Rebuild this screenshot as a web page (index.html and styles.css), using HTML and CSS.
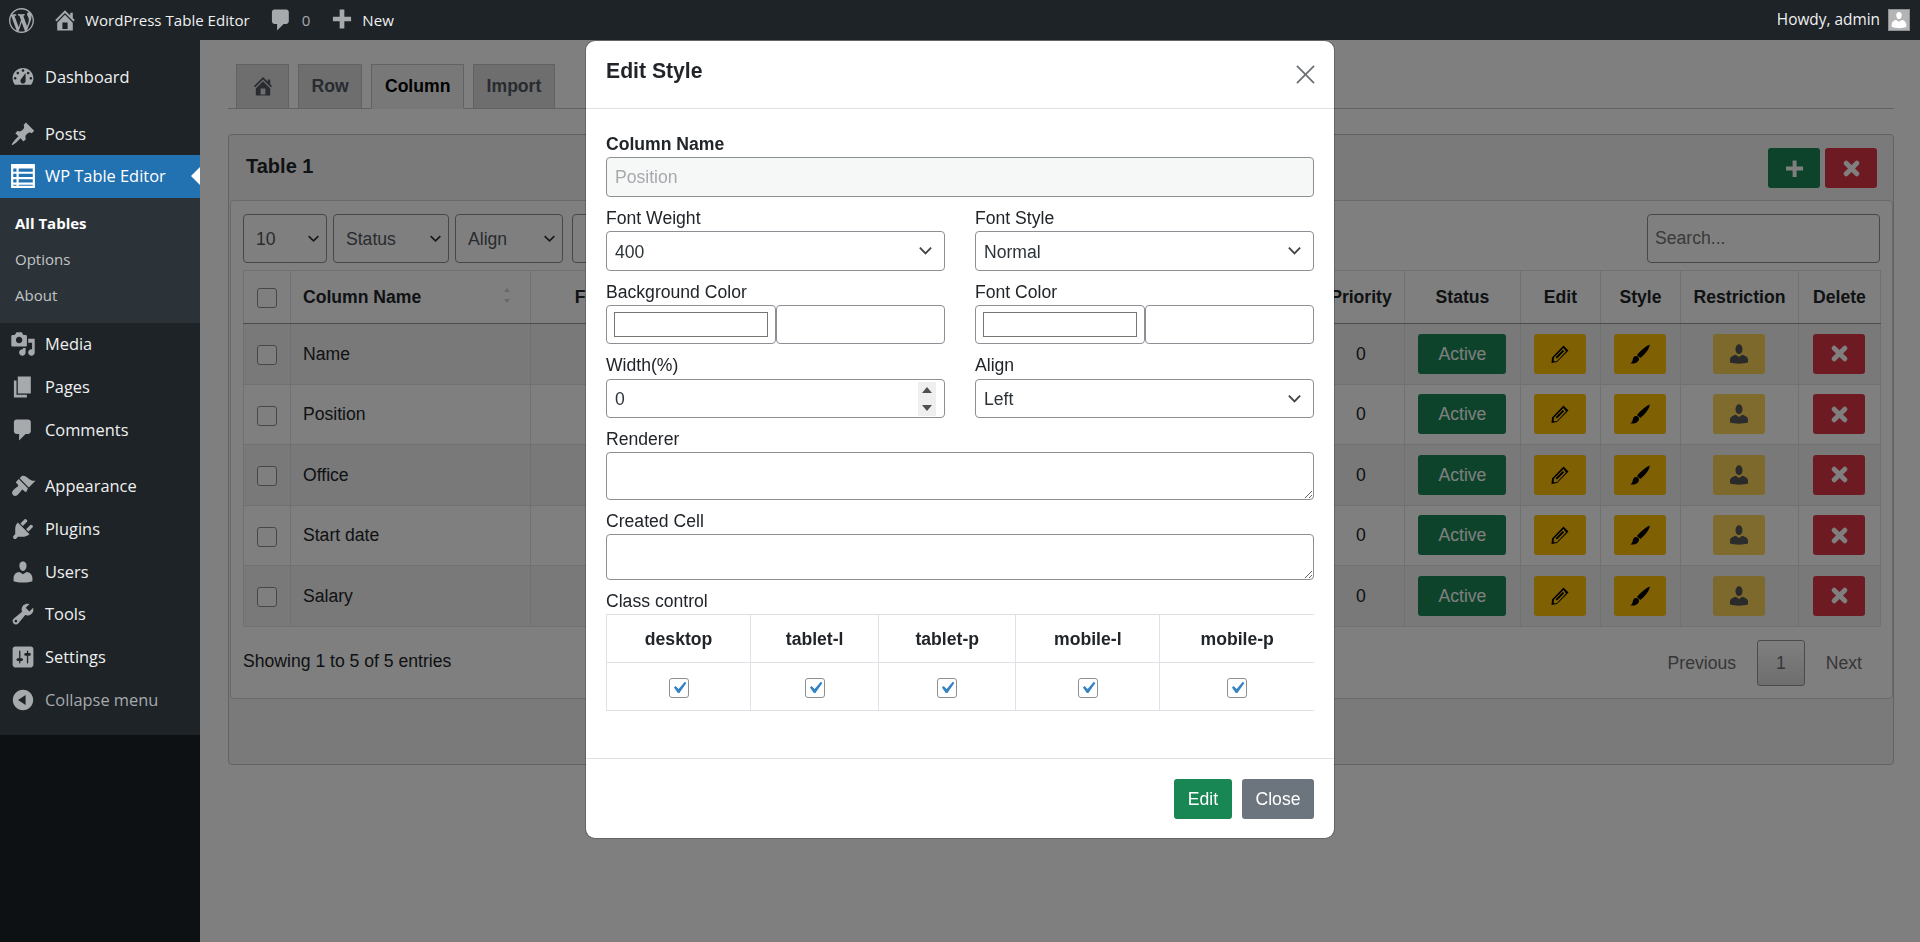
FILE: index.html
```html
<!DOCTYPE html>
<html lang="en">
<head>
    <meta charset="UTF-8">
    <title>WP Table Editor</title>
    <link rel="stylesheet" href="styles.css">
</head>
<body>
    <svg class="sprites" xmlns="http://www.w3.org/2000/svg">
        <symbol id="i-wp" viewBox="0 0 20 20"><path fill-rule="evenodd" d="M20 10c0-5.51-4.49-10-10-10C4.48 0 0 4.49 0 10c0 5.52 4.48 10 10 10 5.51 0 10-4.48 10-10zM7.78 15.37L4.37 6.22c.55-.02 1.17-.08 1.17-.08.5-.06.44-1.13-.06-1.11 0 0-1.45.11-2.37.11-.18 0-.37 0-.58-.01C4.12 2.69 6.87 1.11 10 1.11c2.33 0 4.45.87 6.05 2.34-.68-.11-1.65.39-1.65 1.58 0 .74.45 1.36.9 2.1.35.61.55 1.36.55 2.46 0 1.49-1.4 5-1.4 5l-3.03-8.37c.54-.02.82-.17.82-.17.5-.05.44-1.25-.06-1.22 0 0-1.44.12-2.38.12-.87 0-2.33-.12-2.33-.12-.5-.03-.56 1.2-.06 1.22l.92.08 1.26 3.41zM17.41 10c.24-.64.74-1.87.43-4.25.7 1.29 1.05 2.71 1.05 4.25 0 3.29-1.73 6.24-4.4 7.78.97-2.59 1.94-5.2 2.92-7.78zM6.1 18.09C3.12 16.65 1.11 13.53 1.11 10c0-1.3.23-2.48.72-3.59C3.25 10.3 4.67 14.2 6.1 18.09zm4.03-6.63l2.58 6.98c-.86.29-1.76.45-2.71.45-.79 0-1.57-.11-2.29-.33.81-2.38 1.62-4.74 2.42-7.1z"/></symbol>
        <symbol id="i-home" viewBox="0 0 20 20"><path fill-rule="evenodd" d="M16 8.5l1.53 1.53-1.06 1.06L10 4.62l-6.47 6.47-1.06-1.06L10 2.5l4 4v-2h2v4zm-6-2.46l6 5.99V18H4v-5.97zM12 17v-5H8v5h4z"/></symbol>
        <symbol id="i-comment" viewBox="0 0 20 20"><path d="M5 2h9c1.1 0 2 .9 2 2v7c0 1.1-.9 2-2 2h-2l-5 5v-5H5c-1.1 0-2-.9-2-2V4c0-1.1.9-2 2-2z"/></symbol>
        <symbol id="i-new" viewBox="0 0 20 20"><path d="M17 7.5v3.5h-5.2v5.5H8.2V11H3V7.5h5.2V2h3.6v5.5z"/></symbol>
        <symbol id="i-dashboard" viewBox="0 0 20 20"><path fill-rule="evenodd" d="M3.76 16h12.48c1.1-1.37 1.76-3.11 1.76-5 0-4.42-3.58-8-8-8s-8 3.58-8 8c0 1.89.66 3.63 1.76 5zM10 4c.55 0 1 .45 1 1s-.45 1-1 1-1-.45-1-1 .45-1 1-1zM6 6c.55 0 1 .45 1 1s-.45 1-1 1-1-.45-1-1 .45-1 1-1zm8 0c.55 0 1 .45 1 1s-.45 1-1 1-1-.45-1-1 .45-1 1-1zm-5.37 5.55L12 7v6c0 1.1-.9 2-2 2s-2-.9-2-2c0-.57.24-1.08.63-1.45zM4 10c.55 0 1 .45 1 1s-.45 1-1 1-1-.45-1-1 .45-1 1-1zm12 0c.55 0 1 .45 1 1s-.45 1-1 1-1-.45-1-1 .45-1 1-1z"/></symbol>
        <symbol id="i-post" viewBox="0 0 20 20"><path d="M10.44 3.02l1.82-1.82 6.36 6.35-1.83 1.82c-1.05-.68-2.48-.57-3.41.36l-.75.75c-.92.93-1.04 2.35-.35 3.41l-1.83 1.82-2.41-2.41-2.8 2.79c-.42.42-3.38 2.71-3.8 2.29s1.86-3.39 2.28-3.81l2.79-2.79L4.1 9.36l1.83-1.82c1.05.69 2.48.57 3.4-.36l.75-.75c.93-.92 1.05-2.35.36-3.41z"/></symbol>
        <symbol id="i-media" viewBox="0 0 20 20"><path fill-rule="evenodd" d="M13 11V4c0-.55-.45-1-1-1h-1.67L9 1H5L3.67 3H2c-.55 0-1 .45-1 1v7c0 .55.45 1 1 1h10c.55 0 1-.45 1-1zM7 4.5c1.38 0 2.5 1.12 2.5 2.5S8.38 9.5 7 9.5 4.5 8.38 4.5 7 5.62 4.5 7 4.5zM14 6h5v10.5c0 1.38-1.12 2.5-2.5 2.5S14 17.88 14 16.5s1.12-2.5 2.5-2.5c.17 0 .34.02.5.05V9h-3V6zm-4 8.05V13h2v3.5c0 1.38-1.12 2.5-2.5 2.5S7 17.88 7 16.5 8.12 14 9.5 14c.17 0 .34.02.5.05z"/></symbol>
        <symbol id="i-page" viewBox="0 0 20 20"><path d="M6 15V2h10v13H6zm-1 1h8v2H3V5h2v11z"/></symbol>
        <symbol id="i-appearance" viewBox="0 0 20 20"><path d="M14.48 11.06L7.41 3.99l1.5-1.5c.5-.56 2.3-.47 3.51.32 1.21.8 1.43 1.28 2.91 2.1 1.18.64 2.45 1.26 4.45.85zm-.71.71L6.7 4.7 4.93 6.47c-.39.39-.39 1.02 0 1.41l1.06 1.06c.39.39.39 1.03 0 1.42-.6.6-6.39 3.82-3.67 6.54 2.73 2.72 5.94-3.07 6.54-3.67.39-.39 1.03-.39 1.42 0l1.06 1.06c.39.39 1.02.39 1.41 0z"/></symbol>
        <symbol id="i-plugin" viewBox="0 0 20 20"><path d="M13.11 4.36L9.87 7.6 8 5.73l3.24-3.24c.35-.34 1.05-.2 1.56.32.52.51.66 1.21.31 1.55zm-8 1.77l.91-1.12 9.01 9.01-1.19.84c-.71.71-2.63 1.16-3.82 1.16H6.14L4.9 17.26c-.59.59-1.54.59-2.12 0-.59-.58-.59-1.53 0-2.12l1.24-1.24v-3.88c0-1.13.4-3.19 1.09-3.89zm7.26 3.97l3.24-3.24c.34-.35 1.04-.21 1.55.31.52.51.66 1.21.31 1.55l-3.24 3.25z"/></symbol>
        <symbol id="i-users" viewBox="0 0 20 20"><path d="M10 9.25c-2.27 0-2.73-3.44-2.73-3.44C7 4.02 7.82 2 9.97 2c2.16 0 2.98 2.02 2.71 3.81 0 0-.41 3.44-2.68 3.44zm0 2.57L12.72 10c2.39 0 4.52 2.33 4.52 4.53v2.49s-3.65 1.13-7.24 1.13c-3.65 0-7.24-1.13-7.24-1.13v-2.49c0-2.25 1.94-4.48 4.47-4.48z"/></symbol>
        <symbol id="i-tools" viewBox="0 0 20 20"><path fill-rule="evenodd" d="M16.68 9.77c-1.34 1.34-3.3 1.67-4.95.99l-5.41 6.52c-.99.99-2.59.99-3.58 0s-.99-2.59 0-3.57l6.52-5.42c-.68-1.65-.35-3.61.99-4.95 1.28-1.28 3.12-1.62 4.72-1.06l-2.89 2.89 2.82 2.82 2.86-2.87c.53 1.58.18 3.39-1.08 4.65zM3.81 16.21c.4.39 1.04.39 1.43 0 .4-.4.4-1.04 0-1.43-.39-.4-1.03-.4-1.43 0-.39.39-.39 1.03 0 1.43z"/></symbol>
        <symbol id="i-settings" viewBox="0 0 20 20"><path fill-rule="evenodd" d="M18 16V4c0-1.1-.9-2-2-2H4c-1.1 0-2 .9-2 2v12c0 1.1.9 2 2 2h12c1.1 0 2-.9 2-2zM8 11h1c.55 0 1 .45 1 1s-.45 1-1 1H8v1.5c0 .28-.22.5-.5.5s-.5-.22-.5-.5V13H6c-.55 0-1-.45-1-1s.45-1 1-1h1V5.5c0-.28.22-.5.5-.5s.5.22.5.5V11zm5-2h-1c-.55 0-1-.45-1-1s.45-1 1-1h1V5.5c0-.28.22-.5.5-.5s.5.22.5.5V7h1c.55 0 1 .45 1 1s-.45 1-1 1h-1v5.5c0 .28-.22.5-.5.5s-.5-.22-.5-.5V9z"/></symbol>
        <symbol id="i-collapse" viewBox="0 0 20 20"><path fill-rule="evenodd" d="M10 2.16c4.33 0 7.84 3.51 7.84 7.84s-3.51 7.84-7.84 7.84S2.16 14.33 2.16 10 5.71 2.16 10 2.16zm2 11.72V6.12L6.18 9.97z"/></symbol>
        <symbol id="i-list" viewBox="0 0 24 24"><path fill-rule="evenodd" d="M1 1h22v22H1zM3 5v3h3V5zm5 0v3h13V5zM3 10v3h3v-3zm5 0v3h13v-3zM3 15v3h3v-3zm5 0v3h13v-3zM3 20v1h3v-1zm5 0v1h13v-1z"/></symbol>
        <symbol id="i-plus" viewBox="0 0 18 18"><path d="M7 .5h4.2V7H18v4.2h-6.8V18H7v-6.8H0V7h7z"/></symbol>
        <symbol id="i-remove" viewBox="0 0 16 16"><path fill="none" stroke="currentColor" stroke-width="4.6" stroke-linecap="round" d="M3 3l10 10M13 3L3 13"/></symbol>
        <symbol id="i-pencil" viewBox="0 0 18 18"><path fill-rule="evenodd" d="M12.5.5l5 5L6 17l-5.5 1L1 12.500zM12.500 3L3 12.500l-.4 2.900 1 1L6 16l9-9.500zM11.800 5l1.400 1.300L6 13.500l-1.400-1.300z"/></symbol>
        <symbol id="i-brush" viewBox="0 0 20 20"><path d="M19.600.4c.6 3.600-4.400 9.800-9.200 13.700L6.900 10.900C11 6.200 16.200 1.700 19.600.4zM5.700 12.100c2.300-.2 3.900 1.700 3.100 3.800-1 2.900-5.400 4.300-8.500 3.500 2-.9 2.200-2.500 2.600-4.300.3-1.600 1.300-2.800 2.800-3z"/></symbol>
        <symbol id="i-user" viewBox="0 0 20 20"><ellipse cx="10" cy="5.200" rx="3.500" ry="4.900"/><path d="M1 18.500v-3c0-2.600 3.100-3.900 5.700-4.700L10 13l3.300-2.200c2.600.8 5.700 2.100 5.700 4.700v3c-5.300 1.500-12.700 1.500-18 0z"/></symbol>
    </svg>

    <header class="adminbar">
        <svg class="bar-logo"><use href="#i-wp"/></svg>
        <svg class="bar-icon bar-home"><use href="#i-home"/></svg>
        <span class="bar-text">WordPress Table Editor</span>
        <svg class="bar-icon bar-comment"><use href="#i-comment"/></svg>
        <span class="bar-count">0</span>
        <svg class="bar-icon bar-new"><use href="#i-new"/></svg>
        <span class="bar-text">New</span>
        <span class="bar-howdy">Howdy, admin</span>
        <span class="avatar"><svg><use href="#i-users"/></svg></span>
    </header>

    <div class="wrap">
        <aside class="sidebar">
            <nav class="menu">
                <a class="menu-item"><svg><use href="#i-dashboard"/></svg>Dashboard</a>
                <div class="menu-sep"></div>
                <a class="menu-item"><svg><use href="#i-post"/></svg>Posts</a>
                <a class="menu-item active"><svg><use href="#i-list"/></svg>WP Table Editor</a>
                <div class="submenu">
                    <a class="current">All Tables</a>
                    <a>Options</a>
                    <a>About</a>
                </div>
                <a class="menu-item"><svg><use href="#i-media"/></svg>Media</a>
                <a class="menu-item"><svg><use href="#i-page"/></svg>Pages</a>
                <a class="menu-item"><svg><use href="#i-comment"/></svg>Comments</a>
                <div class="menu-sep"></div>
                <a class="menu-item"><svg><use href="#i-appearance"/></svg>Appearance</a>
                <a class="menu-item"><svg><use href="#i-plugin"/></svg>Plugins</a>
                <a class="menu-item"><svg><use href="#i-users"/></svg>Users</a>
                <a class="menu-item"><svg><use href="#i-tools"/></svg>Tools</a>
                <a class="menu-item"><svg><use href="#i-settings"/></svg>Settings</a>
                <a class="menu-item collapse"><svg><use href="#i-collapse"/></svg>Collapse menu</a>
            </nav>
        </aside>

        <main class="content">
            <div class="tabs">
                <a class="tab tab-home"><svg><use href="#i-home"/></svg></a>
                <a class="tab">Row</a>
                <a class="tab tab-active">Column</a>
                <a class="tab">Import</a>
            </div>

            <section class="card">
                <div class="card-head">
                    <h2>Table 1</h2>
                    <div class="head-buttons">
                        <button class="btn btn-green btn-icon"><svg class="ico-plus"><use href="#i-plus"/></svg></button>
                        <button class="btn btn-red btn-icon"><svg class="ico-remove"><use href="#i-remove"/></svg></button>
                    </div>
                </div>
                <div class="card-inner">
                    <div class="toolbar">
                        <select class="tool-select len"><option>10</option></select>
                        <select class="tool-select status"><option>Status</option></select>
                        <select class="tool-select align"><option>Align</option></select>
                        <select class="tool-select extra"></select>
                        <input class="search" type="text" placeholder="Search...">
                    </div>

                    <table class="grid">
                        <colgroup>
                            <col class="c-check"><col class="c-name"><col class="c-weight"><col class="c-hidden"><col class="c-hidden"><col class="c-hidden"><col class="c-hidden"><col class="c-hidden">
                            <col class="c-priority"><col class="c-status"><col class="c-edit"><col class="c-style"><col class="c-restrict"><col class="c-delete">
                        </colgroup>
                        <thead>
                            <tr>
                                <th><input class="check" type="checkbox"></th>
                                <th class="sortable">Column Name</th>
                                <th>Font Weight</th>
                                <th></th><th></th><th></th><th></th><th></th>
                                <th>Priority</th>
                                <th>Status</th>
                                <th>Edit</th>
                                <th>Style</th>
                                <th>Restriction</th>
                                <th>Delete</th>
                            </tr>
                        </thead>
                        <tbody>
                            <tr>
                                <td><input class="check" type="checkbox"></td>
                                <td class="name">Name</td>
                                <td></td><td></td><td></td><td></td><td></td><td></td>
                                <td>0</td>
                                <td><button class="btn btn-green btn-active">Active</button></td>
                                <td><button class="btn btn-yellow btn-icon"><svg class="ico-pencil"><use href="#i-pencil"/></svg></button></td>
                                <td><button class="btn btn-yellow btn-icon"><svg class="ico-brush"><use href="#i-brush"/></svg></button></td>
                                <td><button class="btn btn-yellow btn-icon btn-off"><svg class="ico-user"><use href="#i-user"/></svg></button></td>
                                <td><button class="btn btn-red btn-icon"><svg class="ico-remove"><use href="#i-remove"/></svg></button></td>
                            </tr>
                            <tr>
                                <td><input class="check" type="checkbox"></td>
                                <td class="name">Position</td>
                                <td></td><td></td><td></td><td></td><td></td><td></td>
                                <td>0</td>
                                <td><button class="btn btn-green btn-active">Active</button></td>
                                <td><button class="btn btn-yellow btn-icon"><svg class="ico-pencil"><use href="#i-pencil"/></svg></button></td>
                                <td><button class="btn btn-yellow btn-icon"><svg class="ico-brush"><use href="#i-brush"/></svg></button></td>
                                <td><button class="btn btn-yellow btn-icon btn-off"><svg class="ico-user"><use href="#i-user"/></svg></button></td>
                                <td><button class="btn btn-red btn-icon"><svg class="ico-remove"><use href="#i-remove"/></svg></button></td>
                            </tr>
                            <tr>
                                <td><input class="check" type="checkbox"></td>
                                <td class="name">Office</td>
                                <td></td><td></td><td></td><td></td><td></td><td></td>
                                <td>0</td>
                                <td><button class="btn btn-green btn-active">Active</button></td>
                                <td><button class="btn btn-yellow btn-icon"><svg class="ico-pencil"><use href="#i-pencil"/></svg></button></td>
                                <td><button class="btn btn-yellow btn-icon"><svg class="ico-brush"><use href="#i-brush"/></svg></button></td>
                                <td><button class="btn btn-yellow btn-icon btn-off"><svg class="ico-user"><use href="#i-user"/></svg></button></td>
                                <td><button class="btn btn-red btn-icon"><svg class="ico-remove"><use href="#i-remove"/></svg></button></td>
                            </tr>
                            <tr>
                                <td><input class="check" type="checkbox"></td>
                                <td class="name">Start date</td>
                                <td></td><td></td><td></td><td></td><td></td><td></td>
                                <td>0</td>
                                <td><button class="btn btn-green btn-active">Active</button></td>
                                <td><button class="btn btn-yellow btn-icon"><svg class="ico-pencil"><use href="#i-pencil"/></svg></button></td>
                                <td><button class="btn btn-yellow btn-icon"><svg class="ico-brush"><use href="#i-brush"/></svg></button></td>
                                <td><button class="btn btn-yellow btn-icon btn-off"><svg class="ico-user"><use href="#i-user"/></svg></button></td>
                                <td><button class="btn btn-red btn-icon"><svg class="ico-remove"><use href="#i-remove"/></svg></button></td>
                            </tr>
                            <tr>
                                <td><input class="check" type="checkbox"></td>
                                <td class="name">Salary</td>
                                <td></td><td></td><td></td><td></td><td></td><td></td>
                                <td>0</td>
                                <td><button class="btn btn-green btn-active">Active</button></td>
                                <td><button class="btn btn-yellow btn-icon"><svg class="ico-pencil"><use href="#i-pencil"/></svg></button></td>
                                <td><button class="btn btn-yellow btn-icon"><svg class="ico-brush"><use href="#i-brush"/></svg></button></td>
                                <td><button class="btn btn-yellow btn-icon btn-off"><svg class="ico-user"><use href="#i-user"/></svg></button></td>
                                <td><button class="btn btn-red btn-icon"><svg class="ico-remove"><use href="#i-remove"/></svg></button></td>
                            </tr>
                        </tbody>
                    </table>

                    <div class="table-foot">
                        <span class="entries">Showing 1 to 5 of 5 entries</span>
                        <div class="pager">
                            <a class="page">Previous</a>
                            <a class="page page-current">1</a>
                            <a class="page">Next</a>
                        </div>
                    </div>
                </div>
                <div class="card-foot"></div>
            </section>
        </main>
    </div>

    <div class="backdrop"></div>

    <div class="modal">
        <div class="modal-head">
            <h3>Edit Style</h3>
            <svg class="modal-close" viewBox="0 0 20 20"><path d="M1 1l18 18M19 1L1 19"/></svg>
        </div>
        <div class="modal-body">
            <div class="field">
                <label class="strong">Column Name</label>
                <input class="control" type="text" value="Position" disabled>
            </div>
            <div class="pair">
                <div class="field">
                    <label>Font Weight</label>
                    <select class="control"><option>400</option></select>
                </div>
                <div class="field">
                    <label>Font Style</label>
                    <select class="control"><option>Normal</option></select>
                </div>
            </div>
            <div class="pair">
                <div class="field">
                    <label>Background Color</label>
                    <div class="color-group">
                        <input class="control color" type="color" value="#ffffff">
                        <input class="control" type="text">
                    </div>
                </div>
                <div class="field">
                    <label>Font Color</label>
                    <div class="color-group">
                        <input class="control color" type="color" value="#ffffff">
                        <input class="control" type="text">
                    </div>
                </div>
            </div>
            <div class="pair">
                <div class="field">
                    <label>Width(%)</label>
                    <input class="control" type="number" value="0">
                </div>
                <div class="field">
                    <label>Align</label>
                    <select class="control"><option>Left</option></select>
                </div>
            </div>
            <div class="field">
                <label>Renderer</label>
                <textarea class="control area-one"></textarea>
            </div>
            <div class="field">
                <label>Created Cell</label>
                <textarea class="control area-two"></textarea>
            </div>
            <div class="field">
                <label>Class control</label>
                <table class="classes">
                    <colgroup><col class="k1"><col class="k2"><col class="k3"><col class="k4"><col class="k5"></colgroup>
                    <tr><th>desktop</th><th>tablet-l</th><th>tablet-p</th><th>mobile-l</th><th>mobile-p</th></tr>
                    <tr>
                        <td><input class="check" type="checkbox" checked></td>
                        <td><input class="check" type="checkbox" checked></td>
                        <td><input class="check" type="checkbox" checked></td>
                        <td><input class="check" type="checkbox" checked></td>
                        <td><input class="check" type="checkbox" checked></td>
                    </tr>
                </table>
            </div>
        </div>
        <div class="modal-foot">
            <button class="btn btn-green btn-edit">Edit</button>
            <button class="btn btn-grey btn-close">Close</button>
        </div>
    </div>
</body>
</html>
```

FILE: styles.css
```css
* {
    box-sizing: border-box;
}

html, body {
    height: 100%;
}

body {
    margin: 0;
    overflow: hidden;
    background-color: #fff;
    color: #212529;
    font-family: "Liberation Sans", Arial, sans-serif;
    font-size: 17.6px;
    line-height: 24px;
}

.sprites {
    display: none;
}

/* admin bar */
.adminbar {
    position: relative;
    z-index: 20;
    display: flex;
    align-items: center;
    height: 40px;
    background-color: #1d2327;
    color: #f0f0f1;
    font-family: "Open Sans", sans-serif;
    font-size: 15.1px;
}

.adminbar svg {
    fill: #a7aaad;
}

.bar-logo {
    width: 25px;
    height: 25px;
    margin-left: 9px;
}

.bar-icon {
    width: 26px;
    height: 26px;
}

.bar-home {
    margin-left: 18px;
}

.bar-comment {
    margin-left: 18px;
}

.bar-new {
    margin-left: 19px;
}

.bar-home + .bar-text {
    margin-left: 7px;
}

.bar-count {
    margin-left: 8px;
    color: #a7aaad;
}

.bar-new + .bar-text {
    margin-left: 7px;
}

.bar-howdy {
    margin-left: auto;
    font-size: 15.4px;
}

.avatar {
    display: flex;
    align-items: flex-end;
    justify-content: center;
    width: 22px;
    height: 22px;
    margin: 0 10px 0 8px;
    background-color: #b4b4b4;
    border: 1px solid #8f9091;
    overflow: hidden;
}

.adminbar .avatar svg {
    width: 20px;
    height: 20px;
    fill: #fff;
}

/* left menu */
.wrap {
    display: flex;
    min-height: calc(100% - 40px);
}

.sidebar {
    flex: 0 0 200px;
    background-color: #1d2327;
}

.menu {
    position: relative;
    z-index: 20;
    height: 695px;
    padding-top: 16px;
    background-color: #1d2327;
    font-family: "Open Sans", sans-serif;
    font-size: 16.4px;
}

.menu-item {
    position: relative;
    display: flex;
    align-items: center;
    gap: 9px;
    height: 42.7px;
    padding-left: 10px;
    padding-bottom: 1px;
    color: #f0f0f1;
}

.menu-item svg {
    width: 26px;
    height: 26px;
    fill: #a7aaad;
}

.menu-sep {
    height: 14px;
}

.menu-item.active {
    height: 43px;
    background-color: #2271b1;
    color: #fff;
}

.menu-item.active svg {
    fill: #fff;
}

.menu-item.active::after {
    content: "";
    position: absolute;
    right: 0;
    top: 12px;
    border: 9px solid transparent;
    border-left-width: 0;
    border-right-color: #fff;
}

.menu-item.collapse {
    color: #a7aaad;
}

.submenu {
    display: flex;
    flex-direction: column;
    justify-content: center;
    height: 125px;
    padding: 0 0 2px 15px;
    background-color: #2c3338;
    color: #c3c4c7;
    font-size: 15px;
    line-height: 35.8px;
}

.submenu .current {
    color: #fff;
    font-weight: 700;
}

/* page content */
.content {
    flex: 1;
    min-width: 0;
    padding: 24px 26px 0 28px;
}

.tabs {
    display: flex;
    gap: 9px;
    height: 45px;
    padding-left: 8px;
    border-bottom: 1px solid #c3c4c7;
}

.tab {
    display: flex;
    align-items: center;
    justify-content: center;
    height: 45px;
    padding: 0 12.6px 2px;
    background-color: #dcdcde;
    border: 1px solid #c3c4c7;
    color: #50575e;
    font-weight: 700;
}

.tab-home {
    width: 53px;
}

.tab-home svg {
    width: 24px;
    height: 24px;
    fill: #50575e;
}

.tab-active {
    background-color: #f0f0f1;
    border-bottom-color: #f0f0f1;
    color: #000;
}

.card {
    margin-top: 25px;
    background-color: #f5f5f5;
    border: 1px solid #c3c4c7;
    border-radius: 4px;
}

.card-head {
    display: flex;
    align-items: center;
    justify-content: space-between;
    height: 65px;
    padding: 0 16px 0 17px;
}

.card-head h2 {
    margin: 0 0 4px;
    font-size: 20px;
    font-weight: 700;
}

.head-buttons {
    display: flex;
    gap: 5px;
    margin-top: 1px;
}

.card-inner {
    height: 499px;
    margin-left: 1px;
    padding: 13px 12px 0;
    background-color: #fff;
    border: 1px solid #d5d5d8;
    border-radius: 4px;
}

.card-foot {
    height: 65px;
}

.toolbar {
    display: flex;
    gap: 6px;
    height: 49px;
}

.tool-select {
    appearance: none;
    height: 49px;
    padding: 0 12px;
    background: #fff url("data:image/svg+xml,%3Csvg xmlns='http://www.w3.org/2000/svg' viewBox='0 0 16 16'%3E%3Cpath fill='none' stroke='%23333' stroke-width='2' d='M2 5l6 6 6-6'/%3E%3C/svg%3E") no-repeat right 6px center / 13px;
    border: 1px solid #8c8f94;
    border-radius: 4px;
    color: #50575e;
    font: inherit;
}

.tool-select.len {
    width: 84px;
}

.tool-select.status {
    width: 116px;
}

.tool-select.align {
    width: 108px;
}

.tool-select.extra {
    width: 120px;
    margin-left: 3px;
}

.search {
    width: 233px;
    height: 49px;
    margin-left: auto;
    padding: 0 7px;
    border: 1px solid #8c8f94;
    border-radius: 4px;
    font: inherit;
}

.search::placeholder {
    color: #757575;
}

/* columns table */
.grid {
    width: 1637px;
    margin-top: 7px;
    table-layout: fixed;
    border-collapse: collapse;
}

.c-check { width: 47px; }
.c-name { width: 240px; }
.c-weight { width: 190px; }
.c-hidden { width: 119.4px; }
.c-priority { width: 87px; }
.c-status { width: 116px; }
.c-edit { width: 80px; }
.c-style { width: 80px; }
.c-restrict { width: 118px; }
.c-delete { width: 82px; }

.grid th,
.grid td {
    padding: 0;
    border: 1px solid #dee2e6;
    text-align: center;
    white-space: nowrap;
}

.grid th {
    position: relative;
    height: 53px;
    border-bottom: 1px solid #999;
    font-weight: 700;
}

.grid th.sortable {
    padding-left: 12px;
    text-align: left;
}

.sortable::before,
.sortable::after {
    content: "";
    position: absolute;
    right: 20px;
    border: 4px solid transparent;
    border-left-width: 3px;
    border-right-width: 3px;
}

.sortable::before {
    top: 17px;
    border-top-width: 0;
    border-bottom-color: #d0d0d0;
}

.sortable::after {
    top: 28px;
    border-bottom-width: 0;
    border-top-color: #d0d0d0;
}

.grid td {
    height: 60.5px;
}

.grid td.name {
    padding-left: 12px;
    text-align: left;
}

.grid tbody tr:nth-child(odd) {
    background-color: #f2f2f2;
}

.check {
    display: inline-block;
    appearance: none;
    width: 20px;
    height: 20px;
    margin: 0;
    vertical-align: middle;
    background: #fff;
    border: 1px solid #8c8f94;
    border-radius: 3px;
}

.check:checked {
    background: #fff url("data:image/svg+xml,%3Csvg xmlns='http://www.w3.org/2000/svg' viewBox='0 0 20 20'%3E%3Cpath fill='%233582c4' d='M14.83 4.89l1.34.94-5.81 8.38H9.02L5.78 9.67l1.34-1.25 2.57 2.4z'/%3E%3C/svg%3E") no-repeat center / 24px;
}

.table-foot {
    display: flex;
    align-items: center;
    justify-content: space-between;
    height: 72px;
}

.entries {
    margin-bottom: 4px;
}

.pager {
    display: flex;
    align-items: center;
    gap: 3px;
    color: #6e6e6e;
}

.page {
    height: 46px;
    padding: 0 18px;
    line-height: 46px;
}

.page-current {
    background: linear-gradient(#fff, #dcdcdc);
    border: 1px solid #979797;
    border-radius: 3px;
    line-height: 44px;
}

/* buttons */
.btn {
    display: inline-flex;
    align-items: center;
    justify-content: center;
    height: 39.6px;
    padding: 0;
    border: none;
    border-radius: 3px;
    color: #fff;
    font: inherit;
    vertical-align: middle;
}

.btn-icon {
    width: 52px;
}

.btn-active {
    width: 88px;
}

.btn-green {
    background-color: #198754;
}

.btn-red {
    background-color: #dc3545;
}

.btn-yellow {
    background-color: #ffc107;
    color: #000;
}

.btn-grey {
    background-color: #6c757d;
}

.btn-off {
    opacity: 0.65;
}

.btn svg {
    fill: currentColor;
}

.ico-plus { width: 17px; height: 17px; }
.ico-remove { width: 17px; height: 17px; }
.ico-pencil { width: 18px; height: 18px; }
.ico-brush { width: 20px; height: 20px; }
.ico-user { width: 20px; height: 20px; }

/* modal */
.backdrop {
    position: fixed;
    inset: 0;
    z-index: 10;
    background-color: #000;
    opacity: 0.5;
}

.modal {
    position: fixed;
    top: 40px;
    left: 585px;
    z-index: 30;
    width: 750px;
    height: 799px;
    background-color: #fff;
    border: 1px solid rgba(0, 0, 0, 0.2);
    border-radius: 10px;
    background-clip: padding-box;
}

.modal-head {
    display: flex;
    align-items: center;
    justify-content: space-between;
    height: 68px;
    padding: 0 19px 7px 20px;
    border-bottom: 1px solid #dee2e6;
}

.modal-head h3 {
    margin: 0;
    font-size: 21.2px;
    font-weight: 700;
}

.modal-close {
    width: 19px;
    height: 19px;
    margin-top: 6px;
    fill: none;
    stroke: #6b6f73;
    stroke-width: 1.8;
}

.modal-body {
    height: 649px;
    padding: 23px 20px 0;
}

.field {
    margin-bottom: 9px;
}

.field label {
    display: block;
    height: 25.2px;
}

.field .strong {
    font-weight: 700;
}

.pair {
    display: grid;
    grid-template-columns: 1fr 1fr;
    gap: 30px;
}

.control {
    display: block;
    width: 100%;
    height: 39.6px;
    margin: 0;
    padding: 0 8px;
    background-color: #fff;
    border: 1px solid #8c8f94;
    border-radius: 4px;
    color: #2c3338;
    font: inherit;
}

.control:disabled {
    padding-top: 2px;
    background-color: #f6f7f7;
    color: #a7aaad;
    opacity: 1;
}

select.control {
    appearance: none;
    padding-top: 2px;
    background: #fff url("data:image/svg+xml,%3Csvg xmlns='http://www.w3.org/2000/svg' viewBox='0 0 16 16'%3E%3Cpath fill='none' stroke='%23444' stroke-width='2' d='M2 5l6 6 6-6'/%3E%3C/svg%3E") no-repeat right 11px center / 15px;
}

input[type="number"].control {
    padding-top: 2px;
}

input[type="number"]::-webkit-inner-spin-button {
    appearance: none;
    opacity: 1;
    width: 18px;
    height: 34px;
    background: #efefef url("data:image/svg+xml,%3Csvg xmlns='http://www.w3.org/2000/svg' viewBox='0 0 18 34'%3E%3Cpath fill='%23505050' d='M9 5l5 6H4zM4 23h10l-5 6z'/%3E%3C/svg%3E") no-repeat center / 18px 34px;
}

.color-group {
    display: grid;
    grid-template-columns: 1fr 1fr;
}

.color-group .color {
    padding: 6px 7px;
}

.color::-webkit-color-swatch-wrapper {
    padding: 0;
}

.color::-webkit-color-swatch {
    border: 1px solid #767676;
    border-radius: 0;
}

textarea.control {
    resize: vertical;
}

.area-one {
    height: 47.6px;
}

.area-two {
    height: 46px;
}

.classes {
    width: 100%;
    table-layout: fixed;
    border-collapse: collapse;
}

.k1 { width: 144px; }
.k2 { width: 128px; }
.k3 { width: 137px; }
.k4 { width: 144px; }
.k5 { width: 154px; }

.classes th,
.classes td {
    height: 48px;
    padding: 0;
    border: 1px solid #dee2e6;
    text-align: center;
}

.classes th:last-child,
.classes td:last-child {
    border-right: none;
}

.classes th {
    font-weight: 700;
}

.modal-foot {
    display: flex;
    justify-content: flex-end;
    gap: 10px;
    height: 80px;
    padding: 20px 20px 0;
    border-top: 1px solid #dee2e6;
}

.btn-edit {
    width: 58px;
}

.btn-close {
    width: 72px;
}
```
